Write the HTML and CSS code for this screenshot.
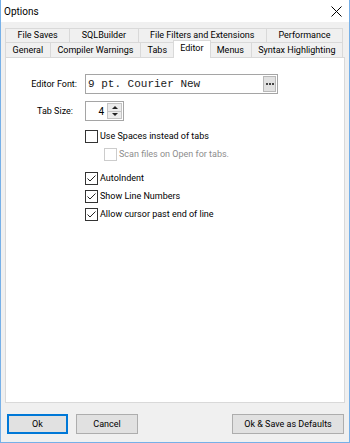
FILE: index.html
```html
<html>
    <head>
        <title>Options</title>
        <link rel="stylesheet" href="styles.css">
    </head>
    <body>
        <div class="window">
            <div class="titlebar">
                <span class="title">Options</span>
                <svg class="close" width="11" height="11" viewBox="0 0 11 11">
                    <path d="M0.5 0.5 L10.5 10.5 M10.5 0.5 L0.5 10.5" stroke="#000" stroke-width="1" fill="none"/>
                </svg>
            </div>
            <div class="content">
                <div class="tabs">
                    <div class="tab-row back">
                        <div class="tab">File Saves</div>
                        <div class="tab">SQLBuilder</div>
                        <div class="tab">File Filters and Extensions</div>
                        <div class="tab">Performance</div>
                    </div>
                    <div class="tab-row front">
                        <div class="tab">General</div>
                        <div class="tab">Compiler Warnings</div>
                        <div class="tab">Tabs</div>
                        <div class="tab active">Editor</div>
                        <div class="tab">Menus</div>
                        <div class="tab">Syntax Highlighting</div>
                    </div>
                </div>
                <div class="panel">
                    <div class="fields">
                        <label class="field-label">Editor Font:</label>
                        <div class="font-box">
                            <span class="font-value">9 pt. Courier New</span>
                            <span class="browse">
                                <svg width="8" height="2" viewBox="0 0 8 2">
                                    <rect x="0" y="0" width="2" height="2" fill="#444"/>
                                    <rect x="3" y="0" width="2" height="2" fill="#444"/>
                                    <rect x="6" y="0" width="2" height="2" fill="#444"/>
                                </svg>
                            </span>
                        </div>
                        <label class="field-label short">Tab Size:</label>
                        <div class="spin">
                            <span class="spin-value">4</span>
                            <span class="spin-buttons">
                                <span class="spin-btn"><span class="arrow-up"></span></span>
                                <span class="spin-btn"><span class="arrow-down"></span></span>
                            </span>
                        </div>
                    </div>
                    <div class="checks">
                        <div class="check"><span class="box"></span>Use Spaces instead of tabs</div>
                        <div class="check disabled indent"><span class="box"></span>Scan files on Open for tabs.</div>
                        <div class="check group">
                            <span class="box"><svg width="11" height="11" viewBox="0 0 11 11"><path d="M1.5 5.5 L4 8 L9.5 2.5" stroke="#222" stroke-width="1" fill="none"/></svg></span>AutoIndent
                        </div>
                        <div class="check">
                            <span class="box"><svg width="11" height="11" viewBox="0 0 11 11"><path d="M1.5 5.5 L4 8 L9.5 2.5" stroke="#222" stroke-width="1" fill="none"/></svg></span>Show Line Numbers
                        </div>
                        <div class="check">
                            <span class="box"><svg width="11" height="11" viewBox="0 0 11 11"><path d="M1.5 5.5 L4 8 L9.5 2.5" stroke="#222" stroke-width="1" fill="none"/></svg></span>Allow cursor past end of line
                        </div>
                    </div>
                </div>
                <div class="buttons">
                    <button class="btn ok">Ok</button>
                    <button class="btn cancel">Cancel</button>
                    <button class="btn defaults">Ok &amp; Save as Defaults</button>
                </div>
            </div>
        </div>
    </body>
</html>
```

FILE: styles.css
```css
body{
    margin: 0;
    font-family: Roboto, "Noto Sans", sans-serif;
    font-size: 9px;
    color: #000;
}
.window{
    width: 350px;
    height: 443px;
    box-sizing: border-box;
    border: 1px solid #76b0e8;
    border-top: none;
    display: flex;
    flex-direction: column;
    background: #f0f0f0;
}
.titlebar{
    height: 22px;
    background: #fff;
    display: flex;
    align-items: center;
    justify-content: space-between;
    padding: 0 7px 0 3px;
}
.title{
    font-size: 10px;
}
.close{
    margin-top: 1px;
}
.content{
    flex: 1;
    display: flex;
    flex-direction: column;
    padding: 6px 4px 8px 4px;
}

/* tabs */
.tabs{
    margin-right: 2px;
}
.tab-row{
    display: flex;
}
.tab-row.back{
    height: 14px;
}
.tab-row.front{
    height: 15px;
}
.tab{
    flex: 1 1 auto;
    padding: 0 4px;
    text-align: center;
    line-height: 13px;
    border: 1px solid #d9d9d9;
    border-bottom: none;
    border-right: none;
    background: #f0f0f0;
    white-space: nowrap;
}
.tab:last-child{
    border-right: 1px solid #d9d9d9;
}
.tab-row.front .tab{
    line-height: 14px;
}
.tab.active{
    background: #fff;
    margin: -2px -1px -1px -1px;
    line-height: 16px;
    border-right: 1px solid #d9d9d9;
    position: relative;
    z-index: 1;
}
.tab.active + .tab{
    border-left: none;
}

/* panel */
.panel{
    flex: 1;
    background: #fff;
    border: 1px solid #d9d9d9;
    padding: 16px 0 0 0;
}
.fields{
    display: grid;
    grid-template-columns: 71px auto;
    column-gap: 8px;
    row-gap: 7px;
    align-items: center;
    justify-items: start;
}
.field-label{
    justify-self: end;
}
.field-label.short{
    margin-right: 4px;
}
.font-box{
    width: 193px;
    height: 20px;
    box-sizing: border-box;
    border: 1px solid #a5a5a5;
    display: flex;
    align-items: center;
    justify-content: space-between;
    padding: 0 1px 0 2px;
}
.font-value{
    font-family: "Liberation Mono", monospace;
    font-size: 11px;
    color: #1a1a1a;
}
.browse{
    width: 13px;
    height: 16px;
    box-sizing: border-box;
    border: 1px solid #b8b8b8;
    background: #e1e1e1;
    display: flex;
    align-items: center;
    justify-content: center;
}
.spin{
    width: 39px;
    height: 20px;
    box-sizing: border-box;
    border: 1px solid #a5a5a5;
    display: flex;
    align-items: center;
    justify-content: flex-end;
    padding: 1px;
}
.spin-value{
    font-size: 10px;
    margin-right: 3px;
}
.spin-buttons{
    width: 15px;
    height: 16px;
    display: flex;
    flex-direction: column;
}
.spin-btn{
    flex: 1;
    background: #ececec;
    border: 1px solid #c4c4c4;
    display: flex;
    align-items: center;
    justify-content: center;
}
.spin-btn + .spin-btn{
    border-top: none;
}
.arrow-up{
    border-left: 3px solid transparent;
    border-right: 3px solid transparent;
    border-bottom: 3px solid #222;
}
.arrow-down{
    border-left: 3px solid transparent;
    border-right: 3px solid transparent;
    border-top: 3px solid #222;
}

/* checkboxes */
.checks{
    margin: 6px 0 0 79px;
}
.check{
    height: 18px;
    display: flex;
    align-items: center;
    gap: 2px;
}
.check.indent{
    margin-left: 19px;
}
.check.group{
    margin-top: 6px;
}
.box{
    width: 13px;
    height: 13px;
    box-sizing: border-box;
    border: 1px solid #333;
    background: #fff;
    display: flex;
    align-items: center;
    justify-content: center;
}
.check.disabled{
    color: #8d8d8d;
}
.check.disabled .box{
    border-color: #cccccc;
}

/* buttons */
.buttons{
    display: flex;
    margin-top: 11px;
    padding: 0 1px 0 2px;
    gap: 8px;
}
.btn{
    height: 20px;
    font-family: Roboto, "Noto Sans", sans-serif;
    font-size: 9px;
    background: #e1e1e1;
    border: 1px solid #adadad;
    padding: 0;
}
.btn.ok{
    width: 61px;
    border-color: #0078d7;
    box-shadow: inset 0 0 0 1px #0078d7;
}
.btn.cancel{
    width: 62px;
}
.btn.defaults{
    width: 112px;
    margin-left: auto;
}
```
